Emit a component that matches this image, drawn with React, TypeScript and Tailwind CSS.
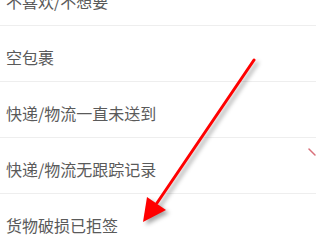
const reasons = ['不喜欢/不想要', '空包裹', '快递/物流一直未送到', '快递/物流无跟踪记录', '货物破损已拒签'];

export default function App() {
  return (
    <div className="relative w-[320px] h-[240px] overflow-hidden bg-white" style={{ fontFamily: '"Noto Sans CJK SC", "Noto Sans", sans-serif' }}>
      <div className="-mt-[30px] w-[316px]">
        {reasons.map((r) => (
          <div key={r} className="h-[56px] flex items-center pt-[7px] pl-[6px] border-b border-[#eeeeee] text-[16px] text-[#5a5a5a]">
            {r}
          </div>
        ))}
      </div>

      {/* faint chevron fragment at right edge */}
      <svg className="absolute left-0 top-0" width="320" height="240" viewBox="0 0 320 240">
        <line x1="309" y1="149" x2="315" y2="155" stroke="#d9707a" strokeWidth="1.5" strokeLinecap="round" />
      </svg>

      {/* annotation arrow */}
      <svg className="absolute left-0 top-0" width="320" height="240" viewBox="0 0 320 240" style={{ filter: 'drop-shadow(3px 3px 2px rgba(0,0,0,0.35))' }}>
        <line x1="254" y1="60" x2="157" y2="203" stroke="#ff0000" strokeWidth="3" strokeLinecap="round" />
        <polygon points="143,222 147,197 166,210" fill="#ff0000" />
      </svg>
    </div>
  );
}
